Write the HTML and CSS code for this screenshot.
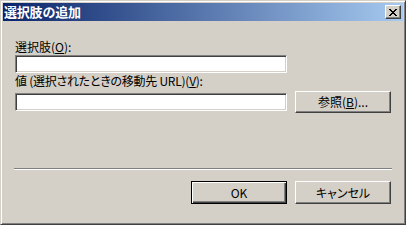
FILE: index.html
```html
<!DOCTYPE html>
<html>
<head lang="ja">
    <meta charset="UTF-8">
    <title>選択肢の追加</title>
    <link rel="stylesheet" href="styles.css">
</head>
<body>
    <div class="window">
        <div class="titlebar">
            <span class="title">選択肢の追加</span>
            <div class="close">
                <svg width="8" height="7" viewBox="0 0 8 7" shape-rendering="crispEdges"><path d="M0 0h2v1H0zM6 0h2v1H6zM1 1h2v1H1zM5 1h2v1H5zM2 2h4v1H2zM3 3h2v1H3zM2 4h4v1H2zM1 5h2v1H1zM5 5h2v1H5zM0 6h2v1H0zM6 6h2v1H6z" fill="#000"/></svg>
            </div>
        </div>
        <div class="content">
            <div class="label first">選択肢(<u>O</u>):</div>
            <div class="field"></div>
            <div class="label tight">値 (選択されたときの移動先 URL)(<u>V</u>):</div>
            <div class="row">
                <div class="field"></div>
                <div class="btn">参照(<u>B</u>)...</div>
            </div>
            <div class="sep"></div>
            <div class="actions">
                <div class="btn big default">OK</div>
                <div class="btn big">キャンセル</div>
            </div>
        </div>
    </div>
</body>
</html>
```

FILE: styles.css
```css
html,body{margin:0;padding:0;background:#d4d0c8;}
body{font-family:"Noto Sans CJK JP","Liberation Sans",sans-serif;font-size:12px;color:#000;}

.window{
    width:406px;
    height:225px;
    box-sizing:border-box;
    border:1px solid;
    border-color:#d4d0c8 #404040 #404040 #d4d0c8;
    box-shadow:inset 1px 1px #fff, inset -1px -1px #808080;
    padding:2px;
    background:#d4d0c8;
}
.titlebar{
    height:18px;
    display:flex;
    align-items:center;
    justify-content:space-between;
    background:linear-gradient(to right,#0a246a,#a6caf0);
    padding:0 2px 0 1px;
}
.title{color:#fff;font-weight:bold;font-size:13px;line-height:18px;letter-spacing:-0.2px;}
.close{
    width:16px;
    height:14px;
    box-sizing:border-box;
    background:#d4d0c8;
    border:1px solid;
    border-color:#fff #404040 #404040 #fff;
    box-shadow:inset -1px -1px #808080;
    display:flex;
    align-items:center;
    justify-content:center;
}
.close svg{display:block;margin-left:-1px;}

.content{padding:0 12px;display:flex;flex-direction:column;}
.label{line-height:14px;margin-top:1px;font-feature-settings:"palt";white-space:nowrap;}
.label.first{margin-top:19px;}
.label.tight{letter-spacing:-0.25px;}
.field{
    width:272px;
    height:18px;
    box-sizing:border-box;
    background:#fff;
    border:1px solid;
    border-color:#808080 #fff #fff #808080;
    box-shadow:inset 1px 1px #404040, inset -1px -1px #d4d0c8;
    margin-top:1px;
}
.row{display:flex;align-items:center;gap:8px;margin-top:3px;height:22px;}
.row .field{margin-top:0;}

.btn{
    width:96px;
    height:22px;
    box-sizing:border-box;
    border:1px solid;
    border-color:#fff #404040 #404040 #fff;
    box-shadow:inset -1px -1px #808080;
    display:flex;
    align-items:center;
    justify-content:center;
    line-height:14px;
    font-feature-settings:"palt";
}
.btn.big{height:23px;}
.btn.default{
    border-color:#000;
    box-shadow:inset 1px 1px #fff, inset -1px -1px #404040, inset -2px -2px #808080;
}

.sep{border-top:1px solid #808080;border-bottom:1px solid #fff;height:0;margin:55px -1px 0 -1px;}
.actions{display:flex;justify-content:flex-end;gap:8px;margin-top:11px;}
```
